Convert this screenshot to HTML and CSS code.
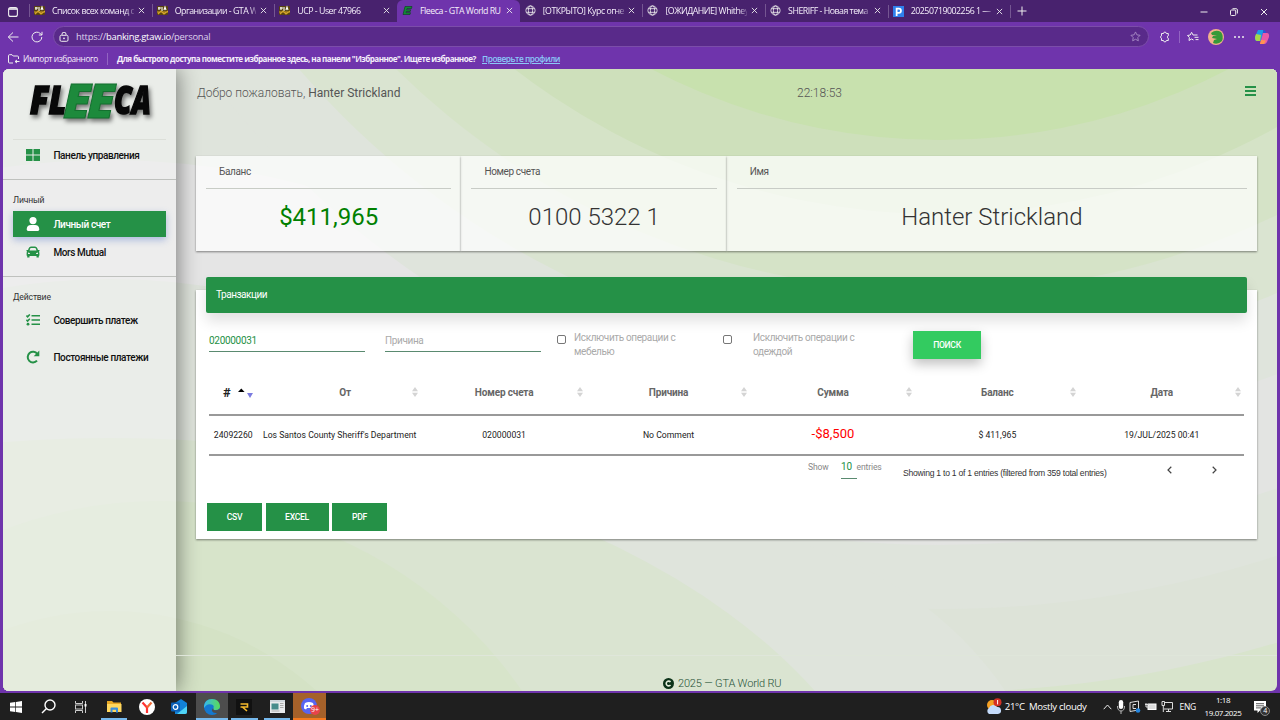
FILE: index.html
```html
<!DOCTYPE html>
<html lang="ru">
<head>
    <meta charset="UTF-8">
    <meta name="viewport" content="width=device-width, initial-scale=1.0">
    <title>Fleeca - GTA World RU</title>
    <link rel="stylesheet" href="styles.css">
</head>
<body>

<!-- shared icons -->
<svg class="defs" width="0" height="0">
    <symbol id="close" viewBox="0 0 8 8"><path d="M1 1l6 6M7 1L1 7" stroke="#eee" fill="none"/></symbol>
    <symbol id="globe" viewBox="0 0 12 12"><g stroke="#eee" fill="none" stroke-width=".9"><circle cx="6" cy="6" r="5"/><ellipse cx="6" cy="6" rx="2.3" ry="5"/><path d="M1.5 4h9M1.5 8h9"/></g></symbol>
    <symbol id="gta" viewBox="0 0 11 9"><rect width="11" height="9" rx="1" fill="#5a4310"/><path d="M1 2h3M2 4V1M5 1v4M7 4l1-3 1 3" stroke="#fff" stroke-width="1.1" fill="none"/><path d="M0 6h11M1 8l3-3 3 3 4-3" stroke="#d6a52a" stroke-width="1.2" fill="none"/></symbol>
    <symbol id="sort" viewBox="0 0 6 10"><path d="M0 4.3L3 0l3 4.3zM0 5.7L3 10l3-4.3z" fill="#d4d4d4"/></symbol>
</svg>

<div class="tabs">
    <div class="tab-menu"><svg width="10" height="10" viewBox="0 0 10 10"><rect x=".6" y=".6" width="8.8" height="8.8" rx="2" fill="none" stroke="#eee" stroke-width="1.1"/><path d="M1 2h8" stroke="#eee" stroke-width="1.6"/></svg></div>
    <div class="tab"><svg class="fav"><use href="#gta"/></svg><span>Список всех команд се</span><svg class="x"><use href="#close"/></svg></div>
    <div class="tab"><svg class="fav"><use href="#gta"/></svg><span>Организации - GTA Wo</span><svg class="x"><use href="#close"/></svg></div>
    <div class="tab"><svg class="fav"><use href="#gta"/></svg><span>UCP - User 47966</span><svg class="x"><use href="#close"/></svg></div>
    <div class="tab active"><svg class="fav" viewBox="0 0 11 10"><path d="M3 1h7l-.5 2H5l-.3 1.300h4L8.200 6h-4L4 7.200h4.500L8 9H1z" fill="#118a35" stroke="#064016" stroke-width=".6"/></svg><span>Fleeca - GTA World RU</span><svg class="x"><use href="#close"/></svg></div>
    <div class="tab"><svg class="fav"><use href="#globe"/></svg><span>[ОТКРЫТО] Курс огнест</span><svg class="x"><use href="#close"/></svg></div>
    <div class="tab"><svg class="fav"><use href="#globe"/></svg><span>[ОЖИДАНИЕ] Whithey</span><svg class="x"><use href="#close"/></svg></div>
    <div class="tab"><svg class="fav"><use href="#globe"/></svg><span>SHERIFF - Новая тема</span><svg class="x"><use href="#close"/></svg></div>
    <div class="tab last"><svg class="fav" viewBox="0 0 10 10"><rect width="10" height="10" fill="#2f80ed"/><path d="M3.300 9V2.300h2a1.900 1.900 0 0 1 0 3.900h-2" fill="none" stroke="#fff" stroke-width="1.600"/></svg><span>20250719002256 1 — П</span><svg class="x"><use href="#close"/></svg></div>
    <svg class="plus" width="10" height="10" viewBox="0 0 10 10"><path d="M5 .5v9M.5 5h9" stroke="#eee"/></svg>
    <div class="win-buttons">
        <svg width="8" height="8" viewBox="0 0 8 8"><path d="M.5 4h7" stroke="#eee"/></svg>
        <svg width="8" height="8" viewBox="0 0 8 8"><g fill="none" stroke="#eee"><rect x=".5" y="2" width="5.200" height="5.500" rx="1"/><path d="M2.500.7h3.700q1.200 0 1.200 1.200v3.600"/></g></svg>
        <svg width="8" height="8"><use href="#close"/></svg>
    </div>
</div>

<div class="toolbar">
    <svg class="back" width="12" height="12" viewBox="0 0 12 12"><path d="M6 1.500L1.300 6 6 10.500M1.300 6H11.500" fill="none" stroke="#eee"/></svg>
    <svg class="reload" width="12" height="12" viewBox="0 0 12 12"><path d="M10.800 6a4.900 4.900 0 1 1-1.500-3.500L11 4M11 .8V4H7.800" fill="none" stroke="#eee"/></svg>
    <div class="address">
        <svg width="10" height="10" viewBox="0 0 10 10"><g fill="none" stroke="#eee"><rect x="1" y="3.300" width="8" height="6" rx="1.300"/><path d="M3 3V2.200a2 2 0 0 1 4 0V3"/></g><circle cx="5" cy="6.300" r=".9" fill="#eee"/></svg>
        <span class="url">https://<b>banking.gtaw.io</b>/personal</span>
        <svg class="star" width="11" height="11" viewBox="0 0 12 12"><path d="M6 1l1.500 3.200 3.500.5-2.500 2.500.6 3.500L6 9l-3.100 1.700.6-3.500L1 4.700l3.500-.5z" fill="none" stroke="#a78bc4"/></svg>
    </div>
    <div class="tools">
        <svg width="12" height="12" viewBox="0 0 12 12"><path d="M2.500 2.500h2a1.400 1.400 0 0 1 2.800 0h2v2.300a1.300 1.300 0 0 0 0 2.500v2.200h-2a1.400 1.400 0 0 1-2.800 0h-2V7.300a1.300 1.300 0 0 1 0-2.500z" fill="none" stroke="#eee"/></svg>
        <i class="divider"></i>
        <svg width="12" height="12" viewBox="0 0 12 12"><path d="M6.500 9L4.500 8 2 9.500l.4-3L.5 4.500l2.700-.5L4.600 1.300 6 4h4.500M7.500 6.300h4M8.500 8.600h3" fill="none" stroke="#eee"/></svg>
        <svg class="avatar" width="16" height="16" viewBox="0 0 16 16"><circle cx="8" cy="8" r="8" fill="#f2b28c"/><path d="M3 4q5-4 10-1 3 4 1 9-4 4-9 2l1-3 3-1-5-1 1-2 4-.5-5-.5z" fill="#359a38"/></svg>
        <svg width="12" height="12" viewBox="0 0 12 12"><g fill="#eee"><circle cx="2" cy="6" r="1"/><circle cx="6" cy="6" r="1"/><circle cx="10" cy="6" r="1"/></g></svg>
        <svg class="copilot" width="16" height="16" viewBox="0 0 16 16"><path d="M4 1h5.500L7 12H3Q.5 12 1 8z" fill="#1c9be8"/><path d="M1 8l1-3 5 1-1 6H3Q1 12 1 8z" fill="#a6d84a"/><path d="M9.500 1q2 0 2.500 3H9z" fill="#2558d8"/><path d="M9 4h4q2.500 0 2 4l-2 5q-.8 2-3 2H6z" fill="#e85aa8"/><path d="M7 11l5 .5L10 15H6z" fill="#ff9550"/></svg>
    </div>
</div>

<div class="bookmarks">
    <svg width="12" height="10" viewBox="0 0 12 10"><path d="M5 9H1.500Q.5 9 .5 8V1.700q0-1 1-1h2.500L5.200 2h4.300q1 0 1 1v2M7 7.500h4.500M7 7.500L9 6M7 7.500L9 9" fill="none" stroke="#eee"/></svg>
    <span class="import">Импорт избранного</span>
    <i class="divider"></i>
    <b>Для быстрого доступа поместите избранное здесь, на панели "Избранное". Ищете избранное?</b>
    <a class="profiles">Проверьте профили</a>
</div>

<div class="page">
    <svg class="waves" width="1274" height="622" viewBox="3 69 1274 622">
        <rect width="1280" height="720" fill="#d8e4cc"/>
        <circle cx="940" cy="-483" r="1175" fill="#dde3d8"/>
        <circle cx="940" cy="-483" r="1092" fill="#dfe4dc"/>
        <circle cx="940" cy="-483" r="1028" fill="#e3e4e2"/>
        <rect width="400" height="400" fill="#dfe4dc"/>
        <circle cx="110" cy="918" r="758" fill="#e5e5e5"/>
        <circle cx="700" cy="900" r="370" fill="#dfe4dc"/>
        <circle cx="110" cy="918" r="639" fill="#dfe4dc"/>
        <ellipse cx="110" cy="918" rx="800" ry="480" fill="#dae4d1"/>
        <circle cx="160" cy="941" r="440" fill="#d7e4ca"/>
        <circle cx="110" cy="918" r="307" fill="#d4e2c5"/>
        <circle cx="940" cy="-483" r="921" fill="#dfe4dc"/>
        <circle cx="940" cy="-483" r="846" fill="#dae4d1"/>
        <circle cx="940" cy="-483" r="775" fill="#d5e3c7"/>
        <circle cx="940" cy="-483" r="697" fill="#cee0bb"/>
        <circle cx="940" cy="-483" r="623" fill="#c8e1ae"/>
    </svg>

    <div class="sidebar">
        <div class="logo">
            <svg width="140" height="56" viewBox="0 0 140 56">
                <g class="logo-text">
                    <text x="9" y="41" font-size="38" textLength="36" lengthAdjust="spacingAndGlyphs">FL</text>
                    <text x="93" y="41" font-size="38" textLength="37" lengthAdjust="spacingAndGlyphs">CA</text>
                    <text class="ee" x="42" y="45" font-size="48" textLength="28" lengthAdjust="spacingAndGlyphs">E</text>
                    <text class="ee" x="66" y="45" font-size="48" textLength="28" lengthAdjust="spacingAndGlyphs">E</text>
                </g>
            </svg>
        </div>
        <a class="nav-item"><svg width="14" height="12" viewBox="0 0 14 12"><path d="M0 0h6.500v5.500H0zM7.500 0H14v5.500H7.500zM0 6.500h6.500V12H0zM7.500 6.500H14V12H7.500z"/></svg>Панель управления</a>
        <div class="section">
            <h4>Личный</h4>
            <a class="nav-item current"><svg width="14" height="14" viewBox="0 0 14 14"><circle cx="7" cy="3.600" r="3.600"/><path d="M.7 12.300C.7 9.500 2.500 8 5 8h4c2.500 0 4.300 1.500 4.300 4.300 0 1-.6 1.700-1.500 1.700H2.200c-.9 0-1.500-.7-1.500-1.700z"/></svg>Личный счет</a>
            <a class="nav-item"><svg width="14" height="12" viewBox="0 0 14 12"><path fill-rule="evenodd" d="M2.800 2Q3.400.5 5 .5h4q1.600 0 2.200 1.500l.8 2h1.500v1.200l-.7.200q.6.600.6 1.600v2.500l-.6.500v1.500h-2.300V10h-7v1.500H1.200V10l-.6-.5V7q0-1 .6-1.600l-.7-.2V4H2zM4.200 2.500L3.500 4.500h7l-.7-2Q9.600 2 9 2H5q-.6 0-.8.500zM2 6.500V8h2.200q0-1.400-2.200-1.500zm10 0Q9.800 6.600 9.800 8H12z"/></svg>Mors Mutual</a>
        </div>
        <div class="section actions">
            <h4>Действие</h4>
            <a class="nav-item"><svg width="14" height="12" viewBox="0 0 14 12"><path d="M5.500 1.800H14M5.500 6H14M5.500 10.200H14M.4 1.600l1.200 1.200L3.800.4M.4 5.900l1.200 1.200 2.200-2.400" fill="none" stroke="#259147" stroke-width="1.500"/><circle cx="2" cy="10.200" r="1.400"/></svg>Совершить платеж</a>
            <a class="nav-item"><svg width="14" height="14" viewBox="0 0 14 14"><path d="M11 10.600A5.300 5.300 0 1 1 11.300 4" fill="none" stroke="#259147" stroke-width="2"/><path d="M13.300.6v5.600H7.700z"/></svg>Постоянные платежи</a>
        </div>
    </div>

    <div class="main">
        <div class="welcome">
            <div class="hello">Добро пожаловать, <b>Hanter Strickland</b></div>
            <div class="clock">22:18:53</div>
            <svg class="burger" width="11" height="10" viewBox="0 0 11 10"><path d="M0 1h11M0 5h11M0 9h11" stroke="#259147" stroke-width="1.800"/></svg>
        </div>

        <div class="stats">
            <div class="stat"><h5>Баланс</h5><p class="money">$411,965</p></div>
            <div class="stat"><h5>Номер счета</h5><p>0100 5322 1</p></div>
            <div class="stat"><h5>Имя</h5><p>Hanter Strickland</p></div>
        </div>

        <div class="card">
            <div class="card-header">Транзакции</div>
            <div class="filters">
                <div class="field value">020000031</div>
                <div class="field">Причина</div>
                <label><i class="check"></i><span>Исключить операции с мебелью</span></label>
                <label class="wide"><i class="check"></i><span>Исключить операции с одеждой</span></label>
                <button class="search">ПОИСК</button>
            </div>
            <table>
                <thead>
                    <tr>
                        <th class="num"># <svg width="16" height="10" viewBox="0 0 16 10"><path d="M0 4l3.300-3.500L6.600 4z" fill="#000"/><path d="M9 5h6l-3 5z" fill="#7b7be0"/></svg></th>
                        <th class="from">От<svg class="sort"><use href="#sort"/></svg></th>
                        <th>Номер счета<svg class="sort"><use href="#sort"/></svg></th>
                        <th>Причина<svg class="sort"><use href="#sort"/></svg></th>
                        <th>Сумма<svg class="sort"><use href="#sort"/></svg></th>
                        <th>Баланс<svg class="sort"><use href="#sort"/></svg></th>
                        <th>Дата<svg class="sort"><use href="#sort"/></svg></th>
                    </tr>
                </thead>
                <tbody>
                    <tr>
                        <td>24092260</td>
                        <td>Los Santos County Sheriff's Department</td>
                        <td>020000031</td>
                        <td>No Comment</td>
                        <td class="minus">-$8,500</td>
                        <td>$ 411,965</td>
                        <td>19/JUL/2025 00:41</td>
                    </tr>
                </tbody>
            </table>
            <div class="table-footer">
                <div class="length">Show <span class="count">10</span> entries</div>
                <div class="info">Showing 1 to 1 of 1 entries (filtered from 359 total entries)</div>
                <svg class="prev" width="5" height="8" viewBox="0 0 5 8"><path d="M4.300.8L1 4l3.300 3.200" fill="none" stroke="#444" stroke-width="1.200"/></svg>
                <svg class="next" width="5" height="8" viewBox="0 0 5 8"><path d="M.7.8L4 4 .7 7.200" fill="none" stroke="#444" stroke-width="1.200"/></svg>
            </div>
            <div class="export">
                <button>CSV</button>
                <button class="excel">EXCEL</button>
                <button>PDF</button>
            </div>
        </div>

        <div class="footer">
            <svg width="11" height="11" viewBox="0 0 11 11"><circle cx="5.500" cy="5.500" r="5.500" fill="#0b3218"/><path d="M7.500 4A2.400 2.400 0 1 0 7.500 7" fill="none" stroke="#e4eedd" stroke-width="1.600"/></svg>
            <span>2025 — GTA World RU</span>
        </div>
    </div>
</div>

<div class="taskbar">
    <div class="task"><svg width="12" height="12" viewBox="0 0 12 12"><path d="M0 1.700L5.300 1v4.600H0zM6 .9L12 0v5.600H6zM0 6.400h5.300V11L0 10.300zM6 6.400h6V12l-6-.9z" fill="#fff"/></svg></div>
    <div class="task"><svg width="15" height="15" viewBox="0 0 15 15"><circle cx="9" cy="6" r="5" fill="none" stroke="#fff" stroke-width="1.400"/><path d="M5.500 9.500L1 14" stroke="#fff" stroke-width="1.500"/></svg></div>
    <div class="task"><svg width="12" height="12" viewBox="0 0 12 12"><g fill="none" stroke="#ccc"><path d="M.5 0v2.500h7V0M.5 12V9.500h7V12M10.500 0v12"/><rect x=".5" y="4" width="7" height="4"/></g><path d="M9.500 3h2v2.500h-2z" fill="#fff"/></svg></div>
    <div class="task open"><svg width="15" height="13" viewBox="0 0 15 13"><path d="M0 1h5l1.500 1.500H14V12H0z" fill="#e8a825"/><path d="M0 4h14.500v8H0z" fill="#ffd75e"/><path d="M3.500 12.500V8.500q0-1 1-1h5.500q1 0 1 1v4H9v-2.800H5.500v2.800z" fill="#3a8ede"/></svg></div>
    <div class="task"><svg width="16" height="16" viewBox="0 0 16 16"><circle cx="8" cy="8" r="8" fill="#fff"/><path d="M3.500 3.500L8 8.500V14" stroke="#f33" stroke-width="2.200" fill="none"/><path d="M12.500 3.500L8 8.500" stroke="#f06a35" stroke-width="2.200"/></svg></div>
    <div class="task"><svg width="16" height="15" viewBox="0 0 16 15"><path d="M4 4l6-4 6 4v9q0 2-2 2H4z" fill="#1282d8"/><path d="M6 15l10-8v6q0 2-2 2z" fill="#4fd4f5"/><rect y="3.500" width="9" height="9" rx="1" fill="#0b60b8"/><circle cx="4.500" cy="8" r="2.300" fill="none" stroke="#fff" stroke-width="1.200"/></svg></div>
    <div class="task open edge"><svg width="16" height="16" viewBox="0 0 16 16"><defs><linearGradient id="eg" x1="0" x2="1"><stop stop-color="#35b7ee"/><stop offset="1" stop-color="#5bdc55"/></linearGradient></defs><circle cx="8" cy="8" r="8" fill="#1478d0"/><path d="M0 7Q1 0 8 0t8 7q0 4-4.500 4-3 0-2-2 1-3-2-3.500Q3 4 0 9z" fill="url(#eg)"/><path d="M9.500 9q-1 2 2 2.200 2.500 0 4-1.500l1 4-3 1.500q-1-.5-.5-1.200-4 .5-5-2-.3-2 1.500-3z" fill="#4d4d4d"/></svg></div>
    <div class="task open"><svg width="16" height="16" viewBox="0 0 16 16"><rect width="16" height="16" fill="#111"/><path d="M4.500 5h7v3H6.500l4.500 4M4.500 8h3" stroke="#f5b92c" stroke-width="1.600" fill="none"/></svg></div>
    <div class="task open"><svg width="15" height="13" viewBox="0 0 15 13"><rect width="15" height="13" fill="#e8eaec"/><path d="M0 0h15v2H0z" fill="#cfd6dc"/><path d="M1.500 3.500h7v6h-7z" fill="#478c8c"/><path d="M10 3.500h3.500M10 5.500h3.500M10 7.500h3.500M1.500 11h8" stroke="#aaa"/></svg></div>
    <div class="task discord"><svg width="17" height="16" viewBox="0 0 17 16"><circle cx="8" cy="8" r="8" fill="#5865f2"/><path d="M4 5q4-2 8 0 1.500 3 1 5.500l-2 1-1-1.500H6l-1 1.500-2-1Q2.500 8 4 5z" fill="#fff"/><circle cx="6.200" cy="8" r="1" fill="#5865f2"/><circle cx="9.800" cy="8" r="1" fill="#5865f2"/></svg><span class="unread">9+</span></div>

    <div class="tray">
        <svg class="weather" width="17" height="17" viewBox="0 0 17 17"><circle cx="7" cy="7" r="5" fill="#f5a023"/><path d="M4 16a3.500 3.500 0 0 1 0-6 4.500 4.500 0 0 1 8-1 3.500 3.500 0 0 1 1 7z" fill="#c4dbfa"/><circle cx="12.500" cy="4.200" r="4" fill="#d32f24"/><path d="M12.600 2v4.400" stroke="#fff"/></svg>
        <span class="temp">21°C&nbsp; Mostly cloudy</span>
        <svg class="up" width="9" height="6" viewBox="0 0 9 6"><path d="M.7 5.200L4.500 1l3.800 4.200" fill="none" stroke="#eee"/></svg>
        <svg width="8" height="14" viewBox="0 0 8 14"><rect x="1.800" width="4.400" height="9" rx="2.200" fill="#fff"/><path d="M.5 6q0 5 3.500 5t3.500-5M4 11v3" fill="none" stroke="#bbb"/></svg>
        <svg width="12" height="13" viewBox="0 0 12 13"><path d="M1 2.500L9.500 1v9L1 11.500zM7 4.500H4v4h3" fill="none" stroke="#ddd"/><circle cx="9" cy="10.500" r="2.300" fill="#2486e0"/></svg>
        <svg width="12" height="9" viewBox="0 0 12 9"><rect x="3" y="2" width="8" height="5.500" fill="#ddd" stroke="#fff"/><path d="M0 2.500h4M1 1v4h3" stroke="#ddd" fill="none"/></svg>
        <svg width="12" height="12" viewBox="0 0 12 12"><path d="M4 1.500h7.500v6.500H3M1 .5h2.500v4H1zM2.300 5v6M5 10.500h5M7.500 8v2.500" fill="none" stroke="#ddd"/></svg>
        <span class="lang">ENG</span>
        <div class="date">1:18<br>19.07.2025</div>
        <div class="notes"><svg width="12" height="12" viewBox="0 0 12 12"><path d="M0 0h12v9.500H6L3.500 12V9.500H0z" fill="#fff"/><path d="M2 2.700h8M2 4.800h8M2 6.900h5" stroke="#333" stroke-width=".8"/></svg><span>4</span></div>
    </div>
</div>

</body>
</html>
```
FILE: styles.css
```css
* {
    box-sizing: border-box;
}
body {
    margin: 0;
    width: 1280px;
    height: 720px;
    overflow: hidden;
    display: flex;
    flex-direction: column;
    background: #6f34ac;
    font-family: Roboto, sans-serif;
    color: #3c4858;
}
svg {
    display: block;
    flex: none;
}
.defs {
    position: absolute;
}
h4, h5, p {
    margin: 0;
    font-weight: 400;
}

/* browser */
.tabs {
    height: 23px;
    flex: none;
    display: flex;
    align-items: center;
    background: linear-gradient(#48226e 22px, #6f34ac 22px);
    font-family: "Open Sans", sans-serif;
    font-size: 8.8px;
    font-weight: 500;
    letter-spacing: -.5px;
    color: #f4eefa;
}
.tab-menu {
    width: 29px;
    padding-left: 8px;
}
.tab {
    width: 122.7px;
    height: 23px;
    display: flex;
    align-items: center;
    padding: 0 7px 2px 4px;
}
.tab::before {
    content: "";
    width: 1px;
    height: 13px;
    margin-left: -4px;
    margin-right: 4px;
    background: #755692;
}
.tab span {
    width: 84px;
    margin-left: 7px;
    overflow: hidden;
    white-space: nowrap;
    -webkit-mask-image: linear-gradient(90deg, #000 74px, transparent 84px);
}
.tab.active span {
    -webkit-mask-image: none;
}
.tab .fav {
    width: 11px;
    height: 11px;
}
.tab .x {
    width: 7px;
    height: 7px;
    margin-left: 4px;
}
.tab.active {
    background: #6f34ac;
    border-radius: 6px 6px 0 0;
}
.tab.active::before, .tab.active + .tab::before {
    background: none;
}
.tab.last {
    border-right: 1px solid #755692;
    height: 13px;
    padding-bottom: 0;
    margin-bottom: 1px;
}
.plus {
    margin: 0 0 2px 6px;
}
.win-buttons {
    display: flex;
    gap: 22px;
    margin-left: auto;
    padding-right: 12px;
}
.toolbar {
    height: 27px;
    flex: none;
    display: flex;
    align-items: center;
    padding-left: 7px;
}
.reload {
    margin-left: 12px;
}
.address {
    width: 1096px;
    height: 21px;
    margin-left: 10px;
    padding: 0 7px 0 5px;
    display: flex;
    align-items: center;
    background: #592a8a;
    border: 1px solid #7b4da9;
    border-radius: 11px;
}
.url {
    margin-left: 7px;
    font-family: "Open Sans", sans-serif;
    font-size: 9.4px;
    color: #ded2ea;
    letter-spacing: -.25px;
}
.url b {
    color: #fff;
    font-weight: 500;
}
.star {
    margin-left: auto;
}
.tools {
    flex: 1;
    display: flex;
    align-items: center;
    gap: 9px;
    padding-left: 10px;
}
.tools .divider {
    margin: 0 -2px 0 -1px;
}
.divider {
    width: 1px;
    height: 12px;
    background: #9364c2;
}
.bookmarks {
    height: 19px;
    flex: none;
    display: flex;
    align-items: center;
    padding: 0 0 2px 8px;
    font-family: "Open Sans", sans-serif;
    font-size: 8.3px;
    letter-spacing: -.4px;
    color: #f4eefa;
    white-space: nowrap;
}
.import {
    width: 75px;
    margin: 0 9px 0 3px;
}
.bookmarks b {
    width: 361px;
    margin-left: 9px;
    font-size: 8.1px;
    letter-spacing: -.53px;
}
.profiles {
    margin-left: 4px;
    color: #8bc8f8;
    font-weight: 600;
    letter-spacing: -.45px;
    text-decoration: underline;
}

/* bank page */
.page {
    position: relative;
    width: 1274px;
    height: 622px;
    flex: none;
    margin: 0 3px;
    display: flex;
    overflow: hidden;
    border-radius: 6px;
}
.waves {
    position: absolute;
    top: 0;
    left: 0;
}
.sidebar {
    position: relative;
    width: 173px;
    background: rgba(245, 245, 245, .5);
    box-shadow: 2px 0 20px rgba(0, 0, 0, .45);
    color: #111;
}
.logo {
    height: 71px;
    margin: 0 10px;
    padding: 4px 0 0 8px;
    border-bottom: 1px solid #dcdfd9;
}
.logo-text {
    font-family: "Open Sans", sans-serif;
    font-weight: 800;
    font-style: italic;
    fill: #080808;
    stroke: #080808;
    stroke-width: 1.6;
    filter: drop-shadow(2px 3px 2px rgba(0, 0, 0, .5));
}
.logo-text .ee {
    fill: #1d8a3c;
    stroke: #14702f;
    stroke-width: 1;
}
.nav-item {
    display: flex;
    align-items: center;
    height: 26px;
    margin: 0 10px;
    padding-left: 13px;
    gap: 13.4px;
    font-size: 10px;
    letter-spacing: -.39px;
    line-height: 11px;
    font-weight: 500;
    fill: #259147;
    white-space: nowrap;
}
.logo + .nav-item {
    margin-top: 2px;
    margin-bottom: 11px;
}
.section {
    border-top: 1px solid #bfc1be;
    padding-top: 14px;
    height: 97px;
}
.section h4 {
    margin: 0 10px;
    font-size: 8.6px;
    letter-spacing: -.15px;
    line-height: 12px;
    margin-bottom: 5px;
    color: #333;
}
.current {
    color: #fff;
    fill: #fff;
    background: #259147;
    margin-bottom: 2px;
    box-shadow: 0 3px 7px rgba(70, 110, 200, .4);
}
.actions h4 {
    margin-bottom: 4px;
}
.actions .nav-item {
    margin-bottom: 11px;
}
.main {
    position: relative;
    flex: 1;
    padding: 0 20px;
    display: flex;
    flex-direction: column;
}
.welcome {
    display: flex;
    align-items: center;
    height: 47px;
    margin-bottom: 39px;
    font-size: 12px;
    font-weight: 300;
    color: #555;
}
.welcome b {
    font-weight: 400;
}
.hello {
    width: 601px;
    padding-left: 1px;
}
.burger {
    margin: 0 1px 3px auto;
}
.stats {
    display: grid;
    grid-template-columns: 265.4px 265.4px 1fr;
    height: 95px;
    margin-top: 1px;
}
.stat {
    padding: 0 10px;
    background: rgba(255, 255, 255, .73);
    box-shadow: 0 1px 2px rgba(0, 0, 0, .45);
}
.stat h5 {
    height: 33px;
    padding-left: 13px;
    border-bottom: 1px solid #c8ccc6;
    font-size: 10px;
    letter-spacing: -.37px;
    line-height: 31px;
    color: #555;
}
.stat p {
    font-size: 24px;
    line-height: 57px;
    font-weight: 300;
    text-align: center;
    color: #333;
}
.stat .money {
    color: #008000;
    font-weight: 400;
}
.card {
    height: 249px;
    margin-top: 39px;
    padding: 0 10px;
    background: #fff;
    box-shadow: 0 1px 2px rgba(0, 0, 0, .45);
}
.card-header {
    height: 36px;
    margin-top: -13px;
    padding-left: 10px;
    line-height: 35px;
    font-size: 10px;
    letter-spacing: -.45px;
    color: #fff;
    background: #259147;
    border-radius: 2px;
    box-shadow: 0 8px 14px rgba(0, 0, 0, .12);
}
.filters {
    display: flex;
    height: 57px;
    padding: 18px 3px 0;
    font-size: 10px;
    letter-spacing: -.37px;
    color: #aaa;
}
.field {
    width: 156px;
    height: 21px;
    margin-right: 20px;
    line-height: 20px;
    border-bottom: 1px solid #5a8a70;
}
.field.value {
    color: #259147;
    letter-spacing: -.3px;
}
.filters label {
    display: flex;
    width: 166px;
    margin-left: -4px;
    margin-right: 4px;
    line-height: 13.5px;
}
.filters label span {
    width: 115px;
    margin-left: 8px;
}
.filters label.wide span {
    margin-left: 21px;
}
.filters label.wide {
    width: 186px;
}
.check {
    width: 9px;
    height: 9px;
    margin-top: 4px;
    border: 1px solid #777;
    border-radius: 2px;
}
button {
    height: 28px;
    padding: 0;
    border: 0;
    font: 500 8.6px Roboto, sans-serif;
    letter-spacing: -.3px;
    color: #fff;
    background: #259147;
}
.search {
    width: 68px;
    background: #33cb60;
    box-shadow: 0 5px 12px rgba(0, 0, 0, .25);
}
table {
    width: 1035px;
    margin-left: 3px;
    border-collapse: collapse;
    table-layout: fixed;
    font-size: 8.66px;
    color: #222;
}
th {
    position: relative;
    height: 45px;
    padding: 0;
    border-bottom: 2px solid #999;
    font-size: 10px;
    letter-spacing: -.15px;
    font-weight: 700;
    color: #666;
}
th.num {
    width: 48.5px;
    padding-left: 14px;
    text-align: left;
    white-space: nowrap;
    color: #222;
    font-size: 13px;
}
th.num svg {
    display: inline-block;
    margin-left: 4px;
    vertical-align: -1px;
}
th.from {
    padding-left: 11px;
}
.sort {
    position: absolute;
    right: 3.5px;
    top: 17px;
    width: 6px;
    height: 10px;
}
td {
    height: 40px;
    padding: 0;
    border-bottom: 2px solid #999;
    text-align: center;
    white-space: nowrap;
}
td.minus {
    padding-bottom: 3px;
    font-size: 13px;
    color: #f00;
}
.table-footer {
    display: flex;
    height: 47px;
    padding-left: 602px;
    font-size: 8.6px;
    letter-spacing: -.15px;
    color: #888;
}
.length {
    width: 95px;
    line-height: 22px;
}
.count {
    display: inline-block;
    width: 16px;
    height: 23px;
    margin: 0 -2px 0 10px;
    padding-right: 4px;
    text-align: center;
    font-size: 10px;
    color: #259147;
    border-bottom: 1px solid #5a8a70;
}
.info {
    width: 264px;
    font-family: "Liberation Sans", sans-serif;
    font-size: 8.6px;
    letter-spacing: -.25px;
    line-height: 34px;
    color: #333;
}
.prev, .next {
    margin-top: 10px;
}
.next {
    margin-left: 40px;
}
.export {
    display: flex;
    gap: 3.5px;
    padding-left: 1px;
}
.export button {
    width: 55px;
}
.export .excel {
    width: 63px;
}
.footer {
    height: 36px;
    margin: auto -20px 0;
    padding: 22px 0 0 487px;
    display: flex;
    gap: 4px;
    border-top: 1px solid #dfe6da;
    font-size: 11px;
    letter-spacing: -.17px;
    font-weight: 300;
    line-height: 12px;
    color: #245035;
}

/* windows taskbar */
.taskbar {
    height: 27px;
    flex: none;
    margin-top: auto;
    display: flex;
    background: #1f1f1f;
    font-family: "Open Sans", sans-serif;
    color: #fff;
}
.task {
    position: relative;
    width: 32.6px;
    display: flex;
    align-items: center;
    justify-content: center;
}
.task.open::after {
    content: "";
    position: absolute;
    left: 3px;
    right: 3px;
    bottom: 0;
    height: 2px;
    background: #76b9ed;
}
.task.edge {
    background: #4d4d4d;
}
.task.edge::after {
    left: 0;
    right: 0;
}
.discord {
    background: #a5612a;
    border-bottom: 2px solid #f5791f;
}
.unread {
    position: absolute;
    right: 6px;
    bottom: 3px;
    width: 10px;
    height: 10px;
    border-radius: 50%;
    background: #e8434a;
    font-size: 7px;
    line-height: 10px;
    text-align: center;
}
.tray {
    margin-left: auto;
    display: flex;
    align-items: center;
    gap: 4px;
    padding-right: 14px;
    font-size: 9.6px;
    letter-spacing: -.3px;
}
.weather {
    margin-right: -1px;
}
.temp {
    margin-right: -1px;
}
.up {
    margin-left: 13px;
    margin-right: 1px;
}
.lang {
    font-size: 8.5px;
    margin-left: 3px;
}
.date {
    width: 42px;
    margin-left: 2px;
    font-size: 8px;
    line-height: 12.5px;
    text-align: center;
    letter-spacing: -.4px;
}
.notes {
    position: relative;
    margin-left: 6px;
}
.notes span {
    position: absolute;
    left: 6px;
    top: 5px;
    width: 10px;
    height: 10px;
    border-radius: 50%;
    background: #333;
    border: 1px solid #888;
    font-size: 7px;
    line-height: 8px;
    text-align: center;
}
```
